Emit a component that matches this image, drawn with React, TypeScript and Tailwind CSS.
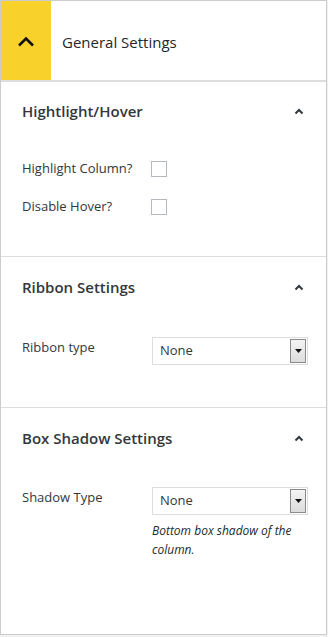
import React from 'react';

const font = { fontFamily: '"Segoe UI", "Open Sans", "Noto Sans", sans-serif' };

function SmallChevron() {
  return (
    <svg width="10" height="7" viewBox="0 0 10 7" className="block">
      <path d="M1.5 5.5 L5 2 L8.5 5.5" fill="none" stroke="#32373c" strokeWidth="2" />
    </svg>
  );
}

function Select() {
  return (
    <div className="flex h-[28px] w-[156px] shrink-0 items-center border border-[#dddddd] bg-white pl-[7px]">
      <span className="flex-1 text-[13px] text-[#32373c]">None</span>
      <div className="mr-[1px] flex h-[24px] w-[16px] items-center justify-center border border-[#8a8a8a] bg-gradient-to-b from-[#f4f4f4] to-[#dcdcdc]">
        <svg width="7" height="4" viewBox="0 0 7 4">
          <path d="M0 0 H7 L3.5 4 Z" fill="#111" />
        </svg>
      </div>
    </div>
  );
}

function Checkbox() {
  return <div className="h-[16px] w-[16px] shrink-0 border border-[#b4b9be] bg-white" />;
}

function SectionHead({ title, tall }: { title: string; tall?: boolean }) {
  return (
    <div className={`flex items-center justify-between ${tall ? 'h-[62px] pb-[2px]' : 'h-[56px] pt-[2px]'}`}>
      <span className="text-[15px] font-semibold text-[#32373c]">{title}</span>
      <span className="mr-[1px]">
        <SmallChevron />
      </span>
    </div>
  );
}

export default function App() {
  return (
    <div className="min-h-[637px] bg-[#f1f1f1]" style={font}>
      <div className="h-[635px] w-[327px] border border-[#cccccc] bg-white">
        <div className="flex h-[81px] border-b-2 border-[#dddddd]">
          <div className="flex w-[50px] items-center justify-center bg-[#f8d12b]">
            <svg width="18" height="11" viewBox="0 0 18 11" className="mt-[2px]">
              <path d="M2 9.5 L9 2.5 L16 9.5" fill="none" stroke="#111" strokeWidth="2.6" />
            </svg>
          </div>
          <div className="flex items-center pl-[11px] pt-[3px] text-[15px] text-[#23282d]">General Settings</div>
        </div>

        <div className="border-b border-[#dddddd] px-[21px]">
          <SectionHead title="Hightlight/Hover" />
          <div className="h-[118px] pt-[18px] text-[13px] text-[#32373c]">
            <div className="flex h-[26px] items-center">
              <span className="w-[129px] shrink-0">Highlight Column?</span>
              <Checkbox />
            </div>
            <div className="mt-[12px] flex h-[26px] items-center">
              <span className="w-[129px] shrink-0">Disable Hover?</span>
              <Checkbox />
            </div>
          </div>
        </div>

        <div className="border-b border-[#dddddd] px-[21px]">
          <SectionHead title="Ribbon Settings" tall />
          <div className="flex h-[88px] pt-[18px] text-[13px] text-[#32373c]">
            <span className="w-[130px] shrink-0 pt-[1px]">Ribbon type</span>
            <Select />
          </div>
        </div>

        <div className="px-[21px]">
          <SectionHead title="Box Shadow Settings" tall />
          <div className="flex pt-[17px] text-[13px] text-[#32373c]">
            <span className="w-[130px] shrink-0 pt-[1px]">Shadow Type</span>
            <div>
              <Select />
              <p className="mt-[6px] w-[150px] text-[12px] italic leading-[19px] text-[#23282d]">
                Bottom box shadow of the column.
              </p>
            </div>
          </div>
        </div>
      </div>
    </div>
  );
}
